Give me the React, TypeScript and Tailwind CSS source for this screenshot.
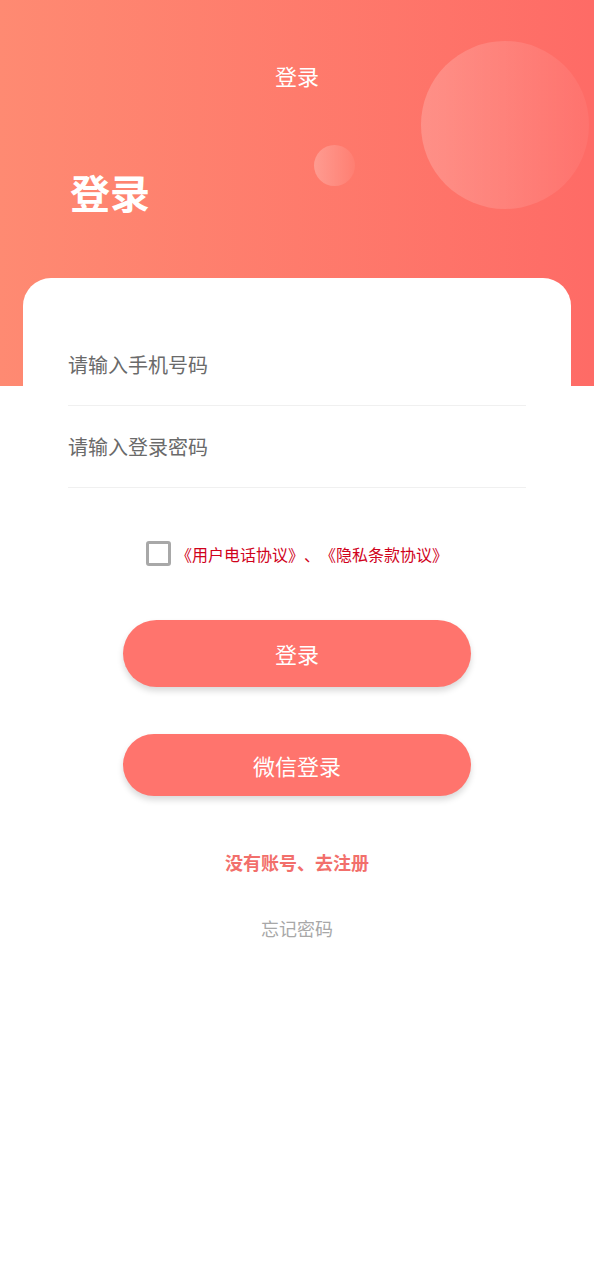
import { useState } from "react";

const font = { fontFamily: '"Noto Sans CJK SC", "Noto Sans", sans-serif' };

export default function App() {
  const [agree, setAgree] = useState(false);

  return (
    <div className="min-h-[1280px] w-[594px] bg-white" style={font}>
      <header className="relative h-[386px] overflow-hidden bg-gradient-to-r from-[#fe8a72] to-[#fe6b66]">
        <div className="absolute left-[421px] top-[41px] h-[168px] w-[168px] rounded-full bg-gradient-to-r from-white/20 to-white/5"></div>
        <div className="absolute left-[314px] top-[145px] h-[41px] w-[41px] rounded-full bg-gradient-to-r from-white/25 to-white/5"></div>
        <div className="relative pt-[59px] text-center text-[22px] leading-[32px] text-white">登录</div>
        <h1 className="relative mt-[78px] pl-[70px] text-[40px] font-bold leading-[46px] text-white">登录</h1>
      </header>

      <main className="relative mx-[23px] -mt-[108px] rounded-t-[28px] bg-white px-[45px] pt-[46px]">
        <div className="flex h-[82px] items-center border-b border-[#f0f0f0]">
          <input
            className="w-full bg-transparent text-[20px] text-[#555] outline-none placeholder:text-[#6a6a6a]"
            placeholder="请输入手机号码"
          />
        </div>
        <div className="flex h-[82px] items-center border-b border-[#f0f0f0]">
          <input
            type="password"
            className="w-full bg-transparent text-[20px] text-[#555] outline-none placeholder:text-[#6a6a6a]"
            placeholder="请输入登录密码"
            style={font}
          />
        </div>

        <div className="mt-[53px] flex items-center justify-center gap-[5px]">
          <button
            onClick={() => setAgree(!agree)}
            className="h-[25px] w-[25px] rounded-[3px] border-[3px] border-[#a8a8a8] bg-white"
          ></button>
          <span className="text-[16px] leading-[24px] text-[#d0021b] [text-spacing-trim:space-all]">
            《用户电话协议》、《隐私条款协议》
          </span>
        </div>

        <div className="mt-[54px] flex flex-col items-center">
          <button className="h-[67px] w-[348px] rounded-full bg-[#ff746d] text-[22px] text-white shadow-[0_4px_6px_rgba(0,0,0,0.15)]">
            登录
          </button>
          <button className="mt-[47px] h-[62px] w-[348px] rounded-full bg-[#ff746d] text-[22px] text-white shadow-[0_4px_6px_rgba(0,0,0,0.15)]">
            微信登录
          </button>
          <div className="mt-[53px] text-[18px] font-bold leading-[26px] text-[#f26f6b]">没有账号、去注册</div>
          <div className="mt-[40px] text-[18px] leading-[26px] text-[#a8a8a8]">忘记密码</div>
        </div>
      </main>
    </div>
  );
}
